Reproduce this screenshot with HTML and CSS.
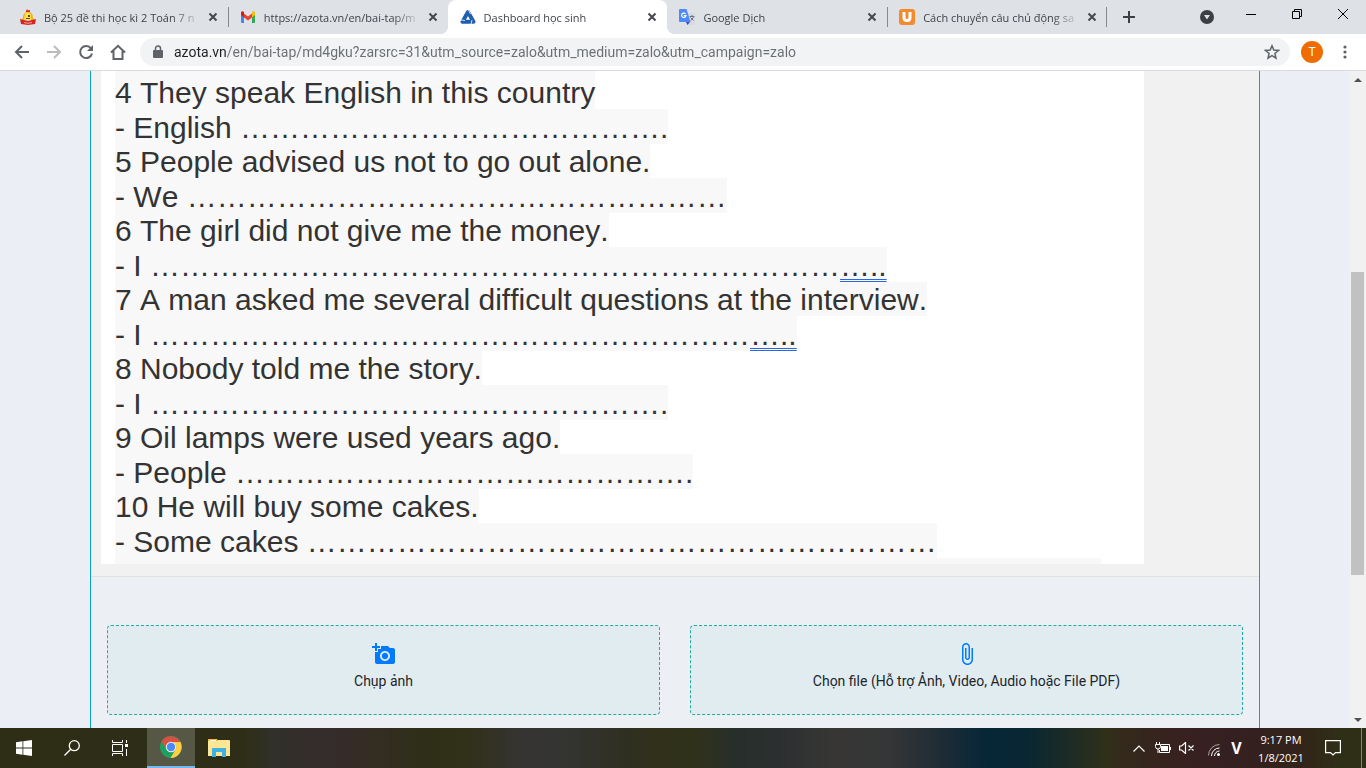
FILE: index.html
```
<!DOCTYPE html>
<html lang="vi">
<head>
<meta charset="utf-8">
<title>Dashboard học sinh</title>
<link rel="stylesheet" href="styles.css">
</head>
<body>
<header class="browser">
  <div class="tabstrip">
    <div class="tabs">
      <div class="tab">
        <svg class="favicon" viewBox="0 0 16 16"><path fill="#e9b51b" d="M3 8c0-2 1-4 3-5l2-1 2 1c2 1 3 3 3 6l2 2H2z"/><path fill="#f7e04b" d="M5 5c1-2 5-2 6 1v5H4z"/><path fill="#d9261c" d="M6 2l1-2 1 1.500L10 1v2H6zM0 10l8 2 8-2-1 5-7 1-7-1z"/><path fill="#f3a79f" d="M4 13l4 .7 4-.7v1l-4 .7-4-.7z"/><path fill="#6b4b12" d="M8 6h2v2H8zM6 9h4v1H6z"/></svg>
        <span class="tab-title">Bộ 25 đề thi học kì 2 Toán 7 n</span>
        <button class="tab-close" aria-label="Close tab"><svg viewBox="0 0 16 16"><path d="M4.500 4.500l7 7m0-7l-7 7"/></svg></button>
      </div>
      <div class="tab divided">
        <svg class="favicon" viewBox="0 0 16 16"><path fill="#4285f4" d="M1 4v9a1 1 0 0 0 1 1h2V6z"/><path fill="#34a853" d="M15 4v9a1 1 0 0 1-1 1h-2V6z"/><path fill="#ea4335" d="M4 4.500l4 3 4-3v4l-4 3-4-3z"/><path fill="#c5221f" d="M1 4c0-2 2-2 3-1v5.500L1 6z"/><path fill="#fbbc04" d="M15 4c0-2-2-2-3-1v5.500L15 6z"/></svg>
        <span class="tab-title">https://azota.vn/en/bai-tap/m</span>
        <button class="tab-close" aria-label="Close tab"><svg viewBox="0 0 16 16"><path d="M4.500 4.500l7 7m0-7l-7 7"/></svg></button>
      </div>
      <div class="tab active">
        <svg class="favicon" viewBox="0 0 16 16"><path fill="none" stroke="#1f5fae" stroke-width="4" stroke-linejoin="round" d="M8 3L2.500 12.800h11z"/><path stroke="#fff" stroke-width=".8" d="M8.500 1l2 4M1 11l4 .5M11 15l1-4"/></svg>
        <span class="tab-title">Dashboard học sinh</span>
        <button class="tab-close" aria-label="Close tab"><svg viewBox="0 0 16 16"><path d="M4.500 4.500l7 7m0-7l-7 7"/></svg></button>
      </div>
      <div class="tab">
        <svg class="favicon" viewBox="0 0 16 16"><path fill="#d7dade" d="M6 4h9a1 1 0 0 1 1 1v10a1 1 0 0 1-1 1H8z"/><path fill="#4a42c4" d="M7 13h4l-2.500 3z"/><path fill="#4c8bf5" d="M1 0h6.500l4 13H1a1 1 0 0 1-1-1V1a1 1 0 0 1 1-1z"/><path fill="none" stroke="#fff" stroke-width="1.200" d="M6.500 4.800a2.200 2.200 0 1 0 .5 1.900H4.800"/><path fill="none" stroke="#6b7785" d="M10.500 7.500h5M13 6v1.500M14.500 7.500c-.5 2-2 3.500-3 4M11.500 8.500l3 3"/></svg>
        <span class="tab-title">Google Dịch</span>
        <button class="tab-close" aria-label="Close tab"><svg viewBox="0 0 16 16"><path d="M4.500 4.500l7 7m0-7l-7 7"/></svg></button>
      </div>
      <div class="tab divided last">
        <svg class="favicon" viewBox="0 0 16 16"><rect width="16" height="16" rx="3" fill="#f58a2c"/><path fill="none" stroke="#fff" stroke-width="3" d="M5 3v5.500c0 4 6 4 6 0V3"/></svg>
        <span class="tab-title">Cách chuyển câu chủ động sa</span>
        <button class="tab-close" aria-label="Close tab"><svg viewBox="0 0 16 16"><path d="M4.500 4.500l7 7m0-7l-7 7"/></svg></button>
      </div>
    </div>
    <button class="new-tab" aria-label="New tab"><svg width="14" height="14" viewBox="0 0 14 14"><path stroke="#3c4043" stroke-width="2" d="M7 1v12M1 7h12"/></svg></button>
    <div class="window-buttons">
      <button class="tab-search" aria-label="Search tabs"><svg width="14" height="14" viewBox="0 0 14 14"><circle cx="7" cy="7" r="7" fill="#3c4043"/><path fill="#dee1e6" d="M4 5h6L7 9.500z"/></svg></button>
      <button aria-label="Minimize"><svg width="10" height="10" viewBox="0 0 10 10"><path fill="none" stroke="#000" d="M0 5.500h10"/></svg></button>
      <button aria-label="Restore"><svg width="10" height="10" viewBox="0 0 10 10"><path fill="none" stroke="#000" d="M.5 2.500h7v7h-7zM2.500 2.500v-2h7v7h-2"/></svg></button>
      <button aria-label="Close"><svg width="10" height="10" viewBox="0 0 10 10"><path stroke="#000" d="M0 0l10 10M10 0L0 10"/></svg></button>
    </div>
  </div>
  <div class="toolbar">
    <button class="tool" aria-label="Back"><svg viewBox="0 0 16 16"><path d="M15 8H2M8 2L2 8l6 6"/></svg></button>
    <button class="tool disabled" aria-label="Forward"><svg viewBox="0 0 16 16"><path d="M1 8h13M8 2l6 6-6 6"/></svg></button>
    <button class="tool" aria-label="Reload"><svg viewBox="0 0 16 16"><path d="M13 4.500A6 6 0 1 0 14 9.500"/><path class="solid" d="M15 1v6H9z"/></svg></button>
    <button class="tool" aria-label="Home"><svg viewBox="0 0 16 16"><path d="M1 8.500L8 1.800l7 6.700M3.500 7v8h9V7"/></svg></button>
    <div class="omnibox">
      <svg width="10" height="14" viewBox="0 0 10 14"><path fill="#5f6368" d="M1 5h8a1 1 0 0 1 1 1v6a1 1 0 0 1-1 1H1a1 1 0 0 1-1-1V6a1 1 0 0 1 1-1z"/><path fill="none" stroke="#5f6368" stroke-width="1.500" d="M2.500 6V3.500a2.500 2.500 0 0 1 5 0V6"/></svg>
      <input class="url" type="text" aria-label="Address" value="azota.vn/en/bai-tap/md4gku?zarsrc=31&amp;utm_source=zalo&amp;utm_medium=zalo&amp;utm_campaign=zalo">
      <button class="star" aria-label="Bookmark"><svg width="16" height="16" viewBox="0 0 16 16"><path fill="none" stroke="#5f6368" stroke-width="1.500" d="M8 1.800l1.800 4.300 4.700.4-3.600 3 1.100 4.600L8 11.700l-4 2.400 1.100-4.600-3.600-3 4.700-.4z"/></svg></button>
    </div>
    <button class="avatar" aria-label="Profile">T</button>
    <button class="menu" aria-label="Menu"><svg width="4" height="14" viewBox="0 0 4 14"><g fill="#5f6368"><circle cx="2" cy="2" r="1.600"/><circle cx="2" cy="7" r="1.600"/><circle cx="2" cy="12" r="1.600"/></g></svg></button>
  </div>
</header>

<div class="viewport">
  <main class="page">
    <div class="frame">
      <section class="assignment">
        <div class="sheet">
          <p class="question first"><span>4 They speak English in this country</span></p>
          <p class="answer"><span>- English …………………………………….</span></p>
          <p class="question"><span>5 People advised us not to go out alone.</span></p>
          <p class="answer"><span>- We ………………………………………………</span></p>
          <p class="question"><span>6 The girl did not give me the money.</span></p>
          <p class="answer"><span>- I ……………………………………………………………<u>…..</u></span></p>
          <p class="question"><span>7 A man asked me several difficult questions at the interview.</span></p>
          <p class="answer"><span>- I ……………………………………………………<u>…..</u></span></p>
          <p class="question"><span>8 Nobody told me the story.</span></p>
          <p class="answer"><span>- I …………………………………………….</span></p>
          <p class="question"><span>9 Oil lamps were used years ago.</span></p>
          <p class="answer"><span>- People ……………………………………….</span></p>
          <p class="question"><span>10 He will buy some cakes.</span></p>
          <p class="answer"><span>- Some cakes ………………………………………………………</span></p>
          <div class="cut-line"></div>
        </div>
      </section>
      <section class="uploads">
        <button class="upload">
          <svg viewBox="0 0 24 24"><path d="M3 4V1h2v3h3v2H5v3H3V6H0V4h3zm3 6V7h3V4h7l1.830 2H21c1.100 0 2 .9 2 2v12c0 1.100-.9 2-2 2H5c-1.100 0-2-.9-2-2V10h3zm7 9c2.760 0 5-2.240 5-5s-2.240-5-5-5-5 2.240-5 5 2.240 5 5 5zm-3.200-5c0 1.770 1.430 3.200 3.200 3.200s3.200-1.430 3.200-3.200-1.430-3.200-3.200-3.200-3.200 1.430-3.200 3.200z"/></svg>
          <span>Chụp ảnh</span>
        </button>
        <button class="upload">
          <svg viewBox="0 0 24 24"><path d="M16.500 6v11.500c0 2.210-1.790 4-4 4s-4-1.790-4-4V5c0-1.380 1.120-2.500 2.500-2.500s2.500 1.120 2.500 2.500v10.500c0 .55-.45 1-1 1s-1-.45-1-1V6H10v9.500c0 1.380 1.120 2.500 2.500 2.500s2.500-1.120 2.500-2.500V5c0-2.210-1.790-4-4-4S7 2.790 7 5v12.500c0 3.040 2.460 5.500 5.500 5.500s5.500-2.460 5.500-5.500V6h-1.500z"/></svg>
          <span>Chọn file (Hỗ trợ Ảnh, Video, Audio hoặc File PDF)</span>
        </button>
      </section>
    </div>
  </main>
  <div class="scrollbar">
    <span class="arrow"><svg width="8" height="4" viewBox="0 0 8 4"><path fill="#505050" d="M0 4l4-4 4 4z"/></svg></span>
    <span class="track-above"></span>
    <span class="thumb"></span>
    <span class="track-below"></span>
    <span class="arrow"><svg width="8" height="4" viewBox="0 0 8 4"><path fill="#505050" d="M0 0l4 4 4-4z"/></svg></span>
  </div>
</div>

<footer class="taskbar">
  <button class="task" aria-label="Start"><svg width="16" height="16" viewBox="0 0 16 16"><path fill="#fff" d="M0 2.200L6.500 1.300v6.200H0zM7.300 1.200L16 0v7.500H7.300zM0 8.400h6.500v6.300L0 13.800zM7.300 8.400H16V16l-8.700-1.200z"/></svg></button>
  <button class="task" aria-label="Search"><svg width="16" height="16" viewBox="0 0 16 16"><g fill="none" stroke="#fff" stroke-width="1.300"><circle cx="10.300" cy="5.700" r="5"/><path d="M6.700 9.300L.5 15.500"/></g></svg></button>
  <button class="task" aria-label="Task view"><svg width="16" height="16" viewBox="0 0 16 16"><path fill="none" stroke="#fff" d="M.5 0v2.500h10V0M.5 16v-2.500h10V16M.5 4.500h10v7H.5zM14.500 0v3M14.500 9v7"/><path fill="#fff" d="M13 4h3v3h-3z"/></svg></button>
  <button class="task running" aria-label="Chrome"><svg width="22" height="22" viewBox="0 0 22 22"><circle cx="11" cy="11" r="11" fill="#1fa15d"/><path fill="#dd4f43" d="M1.500 5.500A11 11 0 0 1 20.500 6H11a5 5 0 0 0-4.600 7z"/><path fill="#ffcd41" d="M20.500 6A11 11 0 0 1 10.500 22l5-8.500A5 5 0 0 0 11 6z"/><circle cx="11" cy="11" r="5.200" fill="#f1f1f1"/><circle cx="11" cy="11" r="4.200" fill="#4a8af4"/></svg></button>
  <button class="task" aria-label="File Explorer"><svg width="22" height="18" viewBox="0 0 22 18"><path fill="#f3b93a" d="M0 0h9l1 2v4H0z"/><path fill="#ffe694" d="M0 2h9l1-1h11a1 1 0 0 1 1 1v15H0z"/><path fill="#fff" d="M2 1h6v1H2z"/><path fill="#3db2e2" d="M4 9h14v9h-4v-5H8v5H4z"/></svg></button>
  <div class="tray">
    <button aria-label="Hidden icons"><svg width="12" height="7" viewBox="0 0 12 7"><path fill="none" stroke="#fff" stroke-width="1.200" d="M.5 6.500L6 1l5.500 5.500"/></svg></button>
    <button aria-label="Battery"><svg width="16" height="12" viewBox="0 0 16 12"><path fill="none" stroke="#fff" d="M6 2.500h8.500v8h-10V8M15.500 5v3M1.500 0v2.500M4.500 0v2.500M.5 2.500h5v2a2.500 2.500 0 0 1-5 0zM3 7v4"/><path fill="#fff" d="M6 4h7v5H6z"/></svg></button>
    <button aria-label="Volume"><svg width="16" height="12" viewBox="0 0 16 12"><path fill="none" stroke="#fff" stroke-width="1.200" d="M.6 4v4h2L6.500 11.500V.5L2.600 4zM9.500 3.500l5 5M14.500 3.500l-5 5"/></svg></button>
    <button aria-label="Network" class="network"><svg width="12" height="12" viewBox="0 0 12 12"><g fill="none" stroke="#aaa29c"><path d="M.5 11.500a11 11 0 0 1 11-11"/><path stroke="#fff" d="M3.500 12a8 8 0 0 1 8-8M6.500 12a5 5 0 0 1 5-5"/></g><circle cx="10.500" cy="10.500" r="1.500" fill="#fff"/></svg></button>
    <button class="ime">V</button>
    <button class="clock"><span>9:17 PM</span><span>1/8/2021</span></button>
    <button class="notice" aria-label="Notifications"><svg width="16" height="16" viewBox="0 0 16 16"><path fill="none" stroke="#fff" stroke-width="1.200" d="M.6.600h14.800v12H10.500L8 15l-2.500-2.400H.6z"/></svg></button>
    <span class="show-desktop"></span>
  </div>
</footer>
</body>
</html>
```
FILE: styles.css
```
* { box-sizing: border-box; }

body {
  margin: 0;
  height: 100vh;
  display: flex;
  flex-direction: column;
  overflow: hidden;
  font-family: "Open Sans", "Noto Sans", sans-serif;
}

button {
  margin: 0;
  padding: 0;
  border: 0;
  background: none;
  color: inherit;
  font: inherit;
  display: flex;
  align-items: center;
  justify-content: center;
}

svg { display: block; flex: none; }
p { margin: 0; }

/* Tab strip */
.tabstrip {
  height: 34px;
  display: flex;
  padding-left: 8px;
  background: #dee1e6;
}

.tabs { display: flex; flex: 0 1 1099px; min-width: 0; }

.tab {
  flex: 1 1 0;
  min-width: 0;
  display: flex;
  align-items: center;
  gap: 8px;
  padding: 0 7px 0 12px;
  color: #3f4347;
  font-size: 11px;
  position: relative;
}

.tab.active { background: #fff; border-radius: 8px 8px 0 0; }

.tab.active::before,
.tab.active::after {
  content: "";
  position: absolute;
  bottom: 0;
  width: 8px;
  height: 8px;
}
.tab.active::before { left: -8px; background: radial-gradient(circle at 0 0, transparent 8px, #fff 8px); }
.tab.active::after { right: -8px; background: radial-gradient(circle at 100% 0, transparent 8px, #fff 8px); }

.tab.divided::before,
.tab.last::after {
  content: "";
  position: absolute;
  left: 0;
  top: 7px;
  width: 1px;
  height: 20px;
  background: #85888c;
}
.tab.last::after { left: auto; right: 0; }

.favicon { width: 16px; height: 16px; }

.tab-title {
  flex: 1;
  min-width: 0;
  overflow: hidden;
  white-space: nowrap;
  margin-right: -4px;
  mask-image: linear-gradient(90deg, #000 calc(100% - 28px), transparent);
}

.tab-close svg { width: 16px; height: 16px; stroke: #45494d; stroke-width: 2; }

.new-tab { width: 44px; }

.window-buttons { display: flex; margin-left: auto; height: 28px; }
.window-buttons button { width: 46px; }
.window-buttons .tab-search { width: 42px; height: 34px; }

/* Toolbar */
.toolbar {
  height: 37px;
  display: flex;
  align-items: center;
  padding-left: 6px;
  background: #fff;
  border-bottom: 1px solid #d9dadd;
}

.tool { width: 32px; height: 32px; }
.tool svg { width: 16px; height: 16px; fill: none; stroke: #5f6368; stroke-width: 2; }
.tool .solid { fill: #5f6368; stroke: none; }
.tool.disabled svg { stroke: #babcbe; }

.omnibox {
  flex: 1;
  min-width: 0;
  height: 28px;
  margin-left: 6px;
  padding: 0 10px 0 13px;
  display: flex;
  align-items: center;
  border-radius: 14px;
  background: #f1f3f4;
}

.url {
  flex: 1;
  min-width: 0;
  margin-left: 11px;
  padding: 0;
  border: 0;
  outline: 0;
  font: 14px Roboto, "Noto Sans", sans-serif;
  color: transparent;
  background: linear-gradient(90deg, #202124 53px, #6a6d72 53px);
  background-clip: text;
}

.avatar {
  width: 22px;
  height: 22px;
  margin-left: 11px;
  border-radius: 50%;
  background: #ef6c00;
  color: #fff;
  font: 12px Roboto, sans-serif;
}

.menu { width: 43px; height: 28px; }

/* Page */
.viewport { flex: 1; min-height: 0; display: flex; background: #ebeef4; }
.page { flex: 1; min-width: 0; overflow: hidden; }

.frame {
  max-width: 1170px;
  min-height: 100%;
  margin: 0 auto;
  border: solid #06a5cb;
  border-width: 0 1px;
  background: #eceff4;
}

.assignment {
  padding: 0 115px 12px 10px;
  background: #f1f1f1;
  border-bottom: 1px solid #e2e2e2;
}

.sheet {
  padding-left: 14px;
  background: #fff;
  color: #333;
  font: 30px "Liberation Sans", Arial, sans-serif;
  font-kerning: none;
  white-space: nowrap;
  overflow: hidden;
}

.question, .answer { display: flex; }
.question span, .answer span { padding-top: 2px; background: #f8f8f8; }
.question { line-height: 32px; }
.answer { line-height: 33px; }
.question.first span { padding-top: 6px; }

.sheet u {
  text-decoration: underline double #2b66dd 1px;
  text-underline-offset: 3px;
  text-decoration-skip-ink: none;
}

.cut-line { width: 986px; max-width: 100%; height: 6px; background: #f8f8f8; }

.uploads {
  display: grid;
  grid-template-columns: 1fr 1fr;
  gap: 30px;
  padding: 48px 16px;
}

.upload {
  height: 90px;
  flex-direction: column;
  gap: 5px;
  padding-bottom: 8px;
  border: 1px dashed #1fada2;
  border-radius: 4px;
  background: #e1ecf1;
  color: #212529;
  font: 14px/20px Roboto, sans-serif;
}
.upload svg { width: 24px; height: 24px; fill: #007bff; }

/* Scrollbar */
.scrollbar {
  width: 16px;
  display: flex;
  flex-direction: column;
  padding: 0 2px 0 1px;
  background: #f1f1f1;
}
.arrow { height: 17px; display: flex; align-items: center; justify-content: center; }
.track-above { flex: 184; }
.thumb { flex: 303; background: #c1c1c1; }
.track-below { flex: 136; }

/* Taskbar */
.taskbar {
  height: 40px;
  display: flex;
  color: #fff;
  background: linear-gradient(90deg, #2e2e17 0%, #2e2e18 18%, #31302a 20%, #352c2c 24%, #352c26 26%, #2e2f18 31%, #313018 34%, #353432 38%, #343433 41%, #2f2f20 46%, #31311a 49%, #2f311a 51%, #262f2b 54%, #2c2f30 57%, #373635 61%, #353637 65%, #1d2c35 69%, #082737 72%, #082633 75%, #1b2b27 78%, #30301a 81%, #332a1b 82%, #38211f 86%, #352021 90%, #33231a 95%, #2f2e17 98%, #2f2f17 100%);
}

.task { width: 48px; }
.task.running {
  margin-left: 3px;
  background: rgba(255, 255, 255, .2);
  border-bottom: 2px solid #76b9ed;
}

.tray { display: flex; margin-left: auto; padding-right: 4px; }
.tray button { width: 24px; }
.tray .network { width: 30px; padding-top: 4px; }
.tray .ime { width: 15px; font: bold 16px "Open Sans", sans-serif; }
.tray .clock {
  width: 74px;
  flex-direction: column;
  padding-top: 2px;
  font-size: 11px;
  line-height: 18px;
}
.tray .notice { width: 30px; }
.show-desktop { width: 14px; border-right: 1px solid #85846f; }
```
